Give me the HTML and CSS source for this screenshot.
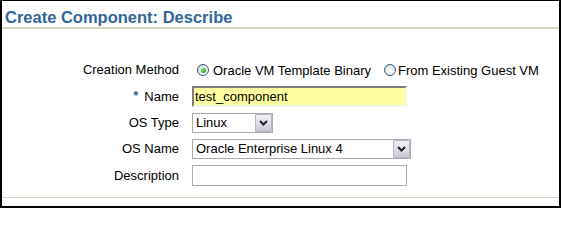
FILE: index.html
```html
<!DOCTYPE html>
<html>
<head>
<meta charset="utf-8">
<link rel="stylesheet" href="styles.css">
</head>
<body>
<div class="panel">
  <h1 class="title">Create Component: Describe</h1>
  <div class="form">
    <div class="label">Creation Method</div>
    <div class="field radios">
      <span class="radio checked"><span class="dot"></span></span>
      <span class="rlabel first">Oracle VM Template Binary</span>
      <span class="radio second"></span>
      <span class="rlabel">From Existing Guest VM</span>
    </div>

    <div class="label"><span class="req">*</span>Name</div>
    <div class="field"><div class="textbox required">test_component</div></div>

    <div class="label">OS Type</div>
    <div class="field">
      <div class="select small"><span class="value">Linux</span><span class="btn"><svg width="9" height="6" viewBox="0 0 9 6"><path d="M1 1 L4.5 4.5 L8 1" fill="none" stroke="#222" stroke-width="2"/></svg></span></div>
    </div>

    <div class="label">OS Name</div>
    <div class="field">
      <div class="select wide"><span class="value">Oracle Enterprise Linux 4</span><span class="btn"><svg width="9" height="6" viewBox="0 0 9 6"><path d="M1 1 L4.5 4.5 L8 1" fill="none" stroke="#222" stroke-width="2"/></svg></span></div>
    </div>

    <div class="label">Description</div>
    <div class="field"><div class="textbox plain"></div></div>
  </div>
  <div class="footer"></div>
</div>
</body>
</html>
```

FILE: styles.css
```css
html, body {
  margin: 0;
  padding: 0;
  background: #ffffff;
}

.panel {
  box-sizing: border-box;
  width: 561px;
  height: 208px;
  border-top: 1px solid #000;
  border-left: 2px solid #000;
  border-right: 2px solid #000;
  border-bottom: 2px solid #000;
  display: flex;
  flex-direction: column;
  font-family: "Liberation Sans", Arial, sans-serif;
  font-size: 13px;
  color: #000;
}

.title {
  margin: 0;
  padding: 7px 3px 1px;
  font-size: 16.5px;
  line-height: 18px;
  font-weight: bold;
  color: #336699;
  border-bottom: 2px solid #d6d6c0;
}

.form {
  margin-top: 31px;
  display: grid;
  grid-template-columns: 177px auto;
  grid-template-rows: 20px 21px 20px 20px 21px;
  column-gap: 13px;
  row-gap: 6px;
  align-items: center;
}

.label {
  text-align: right;
  line-height: 16px;
  white-space: nowrap;
}

.req {
  color: #336699;
  font-weight: bold;
  margin-right: 6px;
  position: relative;
  top: -1px;
}

.field {
  display: flex;
  align-items: center;
  height: 100%;
}

.radios {
  padding-left: 5px;
}

.radio {
  box-sizing: border-box;
  width: 12px;
  height: 12px;
  border-radius: 50%;
  border: 1px solid #2f5a85;
  background: radial-gradient(circle at 65% 65%, #ffffff 0%, #e8e8e4 55%, #c8c8c2 100%);
  display: flex;
  align-items: center;
  justify-content: center;
}

.radio .dot {
  width: 5px;
  height: 5px;
  border-radius: 50%;
  background: radial-gradient(circle at 40% 40%, #8be08b 0%, #2fa82f 60%, #1d7f1d 100%);
}

.rlabel {
  margin-left: 4px;
  white-space: nowrap;
}

.rlabel.first + .radio {
  margin-left: 13px;
}

.radio.second + .rlabel {
  margin-left: 2px;
}

.textbox {
  box-sizing: border-box;
  height: 21px;
  line-height: 17px;
  padding-left: 2px;
  white-space: nowrap;
}

.textbox.required {
  width: 215px;
  background: #ffffa0;
  border-top: 2px solid #7d7d7d;
  border-left: 2px solid #7d7d7d;
  border-right: 2px solid #f4f4ee;
  border-bottom: 2px solid #f4f4ee;
  padding-left: 1px;
}

.textbox.plain {
  width: 215px;
  background: #ffffff;
  border: 1px solid #a5acb2;
}

.select {
  box-sizing: border-box;
  height: 20px;
  border: 1px solid #a5acb2;
  background: #ffffff;
  display: flex;
  align-items: center;
  justify-content: space-between;
  padding-left: 3px;
}

.select.small {
  width: 81px;
}

.select.wide {
  width: 219px;
}

.select .value {
  white-space: nowrap;
  line-height: 16px;
}

.select .btn {
  box-sizing: border-box;
  width: 17px;
  height: 18px;
  border: 1px solid #b4b4c4;
  border-radius: 1px;
  background: linear-gradient(to bottom, #f0f0f6 0%, #dcdce6 60%, #c8c8d6 100%);
  display: flex;
  align-items: center;
  justify-content: center;
}

.footer {
  margin-top: 11px;
  border-top: 1px solid #d6d6c0;
}
```
